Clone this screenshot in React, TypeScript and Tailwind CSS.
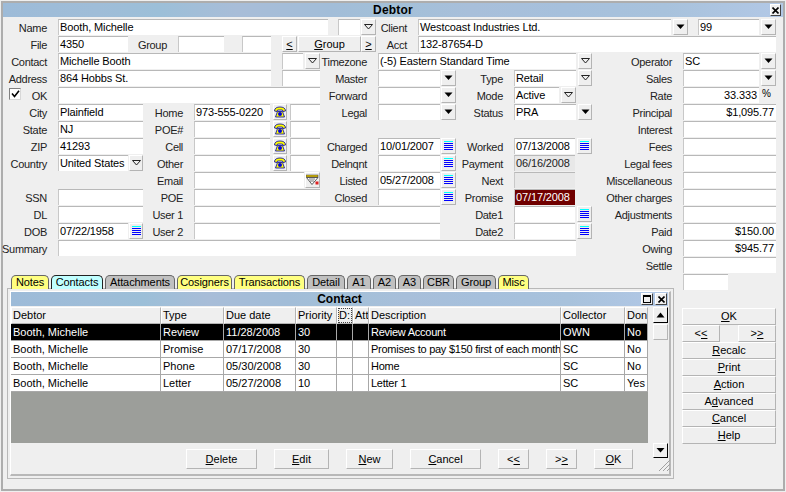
import { ReactNode } from "react";

const titleBg =
  "bg-[linear-gradient(90deg,#9dbbd8_0%,#9fbdd8_12%,#9cbfd8_20%,#a8bdd8_30%,#a2bdd8_42%,#a3c0d8_50%,#a8bfda_60%,#a6c0dc_72%,#a8c2dc_85%,#b2c8e6_100%)]";
const raised = "bg-[#efefef] border border-t-white border-l-white border-r-[#b4b4b4] border-b-[#b4b4b4]";

function Row({ children }: { children: ReactNode }) {
  return <div className="flex h-[17px] shrink-0 items-start">{children}</div>;
}

// label: right aligned, ends 11px before the next field
function L({ w, children }: { w: string; children?: ReactNode }) {
  return (
    <div className={`${w} mr-[11px] flex h-[16px] shrink-0 items-center justify-end whitespace-nowrap pt-[2px] tracking-[-0.3px] text-[#222]`}>
      {children}
    </div>
  );
}

function F({ c, children, right, tone }: { c: string; children?: ReactNode; right?: boolean; tone?: string }) {
  return (
    <div
      className={`${c} ${tone ?? "bg-white text-black"} ${right ? "justify-end pr-[2px]" : "pl-[1px]"} flex h-[16px] shrink-0 items-center overflow-hidden whitespace-nowrap border-t border-l border-t-[#b8b8b8] border-l-[#c8c8c8] leading-none tracking-[-0.12px]`}
    >
      {children}
    </div>
  );
}

function Dd({ c = "", solid }: { c?: string; solid?: boolean }) {
  return (
    <div className={`${c} ${raised} flex h-[16px] w-[15px] shrink-0 items-center justify-center`}>
      <svg width="9" height="6" viewBox="0 0 9 6">
        {solid ? <path d="M0.5 0.5h8L4.5 5z" fill="#000" /> : <path d="M0.5 0.5h8L4.5 5z" fill="none" stroke="#222" />}
      </svg>
    </div>
  );
}

function Cal({ c = "" }: { c?: string }) {
  return (
    <div className={`${c} ${raised} flex h-[16px] w-[15px] shrink-0 items-center justify-center`}>
      <svg width="9" height="10" viewBox="0 0 9 10" shapeRendering="crispEdges">
        <rect x="0" y="0" width="9" height="1" fill="#00ffff" />
        <rect x="0" y="2" width="9" height="1" fill="#0000ff" />
        <rect x="0" y="4" width="9" height="1" fill="#0000ff" />
        <rect x="0" y="6" width="9" height="1" fill="#0000ff" />
        <rect x="0" y="8" width="9" height="1" fill="#0000ff" />
      </svg>
    </div>
  );
}

function Phone() {
  return (
    <div className={`ml-[3px] ${raised} flex h-[16px] w-[14px] shrink-0 items-center justify-center`}>
      <svg width="12" height="12" viewBox="0 0 12 12">
        <path d="M0.5 5C0.5 2 3 1 6 1s5.5 1 5.5 4L9 5.5 8.5 4h-5L3 5.5z" fill="#ffff00" stroke="#0000a0" strokeWidth="0.8" />
        <path d="M3.5 5.5h5l2 5.5h-9z" fill="#ffff00" stroke="#0000a0" strokeWidth="0.8" />
        <circle cx="6" cy="8" r="2" fill="#0000e0" />
      </svg>
    </div>
  );
}

function Mail() {
  return (
    <div className={`ml-[1px] ${raised} flex h-[16px] w-[15px] shrink-0 items-center justify-center`}>
      <svg width="13" height="12" viewBox="0 0 13 12">
        <rect x="0" y="1" width="12" height="2" fill="#e0c000" stroke="#333" strokeWidth="0.5" />
        <path d="M0.5 3.5l5.5 7 6-7z" fill="#fff" stroke="#333" strokeWidth="0.8" />
        <path d="M3 5h6M4 7h4" stroke="#555" strokeWidth="0.8" />
        <rect x="9.5" y="7.5" width="3" height="3" fill="#e02020" />
      </svg>
    </div>
  );
}

function Btn({ c, children }: { c: string; children: ReactNode }) {
  return <div className={`${c} ${raised} flex shrink-0 items-center justify-center whitespace-nowrap leading-none`}>{children}</div>;
}

function Tab({ w, bg, children, active }: { w: string; bg: string; children: string; active?: boolean }) {
  return (
    <div
      className={`${w} ${bg} z-10 flex h-[14px] shrink-0 items-center justify-center rounded-t-[5px] border border-b-0 leading-none tracking-[-0.1px] ${active ? "border-[#222]" : "border-[#666]"}`}
    >
      {children}
    </div>
  );
}

const columns = "grid grid-cols-[150px_63px_72px_41px_16px_16px_192px_64px_23px]";
const heads = ["Debtor", "Type", "Due date", "Priority", "D:", "Att", "Description", "Collector", "Don"];
const rows = [
  ["Booth, Michelle", "Review", "11/28/2008", "30", "", "", "Review Account", "OWN", "No"],
  ["Booth, Michelle", "Promise", "07/17/2008", "30", "", "", "Promises to pay $150 first of each month", "SC", "No"],
  ["Booth, Michelle", "Phone", "05/30/2008", "30", "", "", "Home", "SC", "No"],
  ["Booth, Michelle", "Letter", "05/27/2008", "10", "", "", "Letter 1", "SC", "Yes"],
];

const u = "underline underline-offset-1";

export default function App() {
  return (
    <div className="h-[492px] w-[786px] overflow-hidden bg-[#efefef] p-[1px] font-['Liberation_Sans',Arial,sans-serif] text-[11px] text-black">
      <div className="flex h-[490px] w-[784px] flex-col border-2 border-[#adadad]">
        <div className={`${titleBg} relative flex h-[14px] shrink-0 items-center justify-center text-[12px] font-bold leading-none tracking-[0.2px]`}>
          Debtor
          <div className="absolute right-[2px] top-[1px] flex h-[12px] w-[11px] items-center justify-center border border-t-white border-l-white border-r-[#444] border-b-[#444] bg-[#efefef]">
            <svg width="7" height="7" viewBox="0 0 7 7">
              <path d="M0.5 0.5l6 6M6.5 0.5l-6 6" stroke="#000" strokeWidth="1.6" />
            </svg>
          </div>
        </div>

        <div className="flex h-[2px] shrink-0" />

        <Row>
          <L w="w-[44px]">Name</L>
          <F c="w-[270px]">Booth, Michelle</F>
          <F c="ml-[10px] w-[22px]" />
          <Dd c="ml-[1px]" />
          <L w="w-[31px]">Client</L>
          <F c="w-[253px]">Westcoast Industries Ltd.</F>
          <Dd c="ml-[2px]" solid />
          <F c="ml-[10px] w-[61px]">99</F>
          <Dd c="ml-[2px]" solid />
        </Row>
        <Row>
          <L w="w-[44px]">File</L>
          <F c="w-[70px]">4350</F>
          <L w="w-[39px]">Group</L>
          <F c="w-[46px]" />
          <F c="ml-[18px] w-[29px]" />
          <Btn c="ml-[11px] h-[16px] w-[15px]"><span className={u}>&lt;</span></Btn>
          <Btn c="ml-[1px] h-[16px] w-[63px]"><span><span className={u}>G</span>roup</span></Btn>
          <Btn c="h-[16px] w-[15px]"><span className={u}>&gt;</span></Btn>
          <L w="w-[31px]">Acct</L>
          <F c="w-[358px]">132-87654-D</F>
        </Row>
        <Row>
          <L w="w-[44px]">Contact</L>
          <F c="w-[213px]">Michelle Booth</F>
          <F c="ml-[11px] w-[21px]" />
          <Dd c="ml-[2px]" />
          <L w="w-[47px]">Timezone</L>
          <F c="w-[198px]">(-5) Eastern Standard Time</F>
          <Dd c="ml-[2px] !w-[14px]" />
          <L w="w-[80px]">Operator</L>
          <F c="w-[76px]">SC</F>
          <Dd c="ml-[2px]" solid />
        </Row>
        <Row>
          <L w="w-[44px]">Address</L>
          <F c="w-[213px]">864 Hobbs St.</F>
          <F c="ml-[11px] w-[38px]" />
          <L w="w-[47px]">Master</L>
          <F c="w-[62px]" />
          <Dd c="ml-[1px]" solid />
          <L w="w-[47px]">Type</L>
          <F c="w-[62px]">Retail</F>
          <Dd c="ml-[2px] !w-[14px]" />
          <L w="w-[80px]">Sales</L>
          <F c="w-[76px]" />
          <Dd c="ml-[2px]" solid />
        </Row>
        <Row>
          <div className="ml-[6px] mt-[1px] flex h-[12px] w-[12px] shrink-0 items-center justify-center border border-t-[#808080] border-l-[#808080] border-r-[#d8d8d8] border-b-[#d8d8d8] bg-white">
            <svg width="9" height="8" viewBox="0 0 9 8">
              <path d="M1 3.5l2.5 3L8 0.8" fill="none" stroke="#000" strokeWidth="1.6" />
            </svg>
          </div>
          <L w="w-[26px]">OK</L>
          <F c="w-[262px]" />
          <L w="w-[47px]">Forward</L>
          <F c="w-[62px]" />
          <Dd c="ml-[1px]" solid />
          <L w="w-[47px]">Mode</L>
          <F c="w-[45px]">Active</F>
          <Dd c="ml-[2px]" />
          <L w="w-[96px]">Rate</L>
          <F c="w-[76px]" right>33.333</F>
          <span className="ml-[3px] mt-[2px] text-[10px] leading-none">%</span>
        </Row>
        <Row>
          <L w="w-[44px]">City</L>
          <F c="w-[85px]">Plainfield</F>
          <L w="w-[40px]">Home</L>
          <F c="w-[76px]">973-555-0220</F>
          <Phone />
          <F c="ml-[3px] w-[30px]" />
          <L w="w-[47px]">Legal</L>
          <F c="w-[62px]" />
          <Dd c="ml-[1px]" solid />
          <L w="w-[47px]">Status</L>
          <F c="w-[62px]">PRA</F>
          <Dd c="ml-[2px] !w-[14px]" solid />
          <L w="w-[80px]">Principal</L>
          <F c="w-[93px]" right>$1,095.77</F>
        </Row>
        <Row>
          <L w="w-[44px]">State</L>
          <F c="w-[85px]">NJ</F>
          <L w="w-[40px]">POE#</L>
          <F c="w-[76px]" />
          <Phone />
          <F c="ml-[3px] w-[30px]" />
          <L w="w-[352px]">Interest</L>
          <F c="w-[93px]" />
        </Row>
        <Row>
          <L w="w-[44px]">ZIP</L>
          <F c="w-[85px]">41293</F>
          <L w="w-[40px]">Cell</L>
          <F c="w-[76px]" />
          <Phone />
          <F c="ml-[3px] w-[30px]" />
          <L w="w-[47px]">Charged</L>
          <F c="w-[62px]">10/01/2007</F>
          <Cal c="ml-[1px]" />
          <L w="w-[47px]">Worked</L>
          <F c="w-[61px]">07/13/2008</F>
          <Cal c="ml-[2px]" />
          <L w="w-[80px]">Fees</L>
          <F c="w-[93px]" />
        </Row>
        <Row>
          <L w="w-[44px]">Country</L>
          <F c="w-[70px]">United States</F>
          <Dd c="ml-[1px] !w-[14px]" />
          <L w="w-[40px]">Other</L>
          <F c="w-[76px]" />
          <Phone />
          <F c="ml-[3px] w-[30px]" />
          <L w="w-[47px]">Delnqnt</L>
          <F c="w-[62px]" />
          <Cal c="ml-[1px]" />
          <L w="w-[47px]">Payment</L>
          <F c="w-[61px]" tone="bg-[#e8e8e8] text-[#222]">06/16/2008</F>
          <L w="w-[97px]">Legal fees</L>
          <F c="w-[93px]" />
        </Row>
        <Row>
          <L w="w-[180px]">Email</L>
          <F c="w-[110px]" />
          <Mail />
          <L w="w-[47px]">Listed</L>
          <F c="w-[62px]">05/27/2008</F>
          <Cal c="ml-[1px]" />
          <L w="w-[47px]">Next</L>
          <F c="w-[61px]" tone="bg-[#e8e8e8] text-[#222]" />
          <L w="w-[97px]">Miscellaneous</L>
          <F c="w-[93px]" />
        </Row>
        <Row>
          <L w="w-[44px]">SSN</L>
          <F c="w-[85px]" />
          <L w="w-[40px]">POE</L>
          <F c="w-[126px]" />
          <L w="w-[47px]">Closed</L>
          <F c="w-[62px]" />
          <Cal c="ml-[1px]" />
          <L w="w-[47px]">Promise</L>
          <F c="w-[61px]" tone="bg-[#700000] text-white">07/17/2008</F>
          <L w="w-[97px]">Other charges</L>
          <F c="w-[93px]" />
        </Row>
        <Row>
          <L w="w-[44px]">DL</L>
          <F c="w-[85px]" />
          <L w="w-[40px]">User 1</L>
          <F c="w-[246px]" />
          <L w="w-[63px]">Date1</L>
          <F c="w-[61px]" />
          <Cal c="ml-[2px]" />
          <L w="w-[80px]">Adjustments</L>
          <F c="w-[93px]" />
        </Row>
        <Row>
          <L w="w-[44px]">DOB</L>
          <F c="w-[70px]">07/22/1958</F>
          <Cal c="ml-[1px] !w-[14px]" />
          <L w="w-[40px]">User 2</L>
          <F c="w-[246px]" />
          <L w="w-[63px]">Date2</L>
          <F c="w-[61px]" />
          <Cal c="ml-[2px]" />
          <L w="w-[80px]">Paid</L>
          <F c="w-[93px]" right>$150.00</F>
        </Row>
        <Row>
          <L w="w-[44px]">Summary</L>
          <F c="w-[518px]" />
          <L w="w-[96px]">Owing</L>
          <F c="w-[93px]" right>$945.77</F>
        </Row>
        <Row>
          <L w="w-[669px]">Settle</L>
          <F c="w-[93px]" />
        </Row>

        {/* tabs */}
        <div className="flex h-[14px] shrink-0 items-start">
          <div className="ml-[8px] mt-[1px] flex gap-[2px]">
            <Tab w="w-[38px]" bg="bg-[#ffff80]">Notes</Tab>
            <Tab w="w-[52px]" bg="bg-[#c0ffff]" active>Contacts</Tab>
            <Tab w="w-[70px]" bg="bg-[#c0c0c0]">Attachments</Tab>
            <Tab w="w-[55px]" bg="bg-[#ffff80]">Cosigners</Tab>
            <Tab w="w-[71px]" bg="bg-[#ffff80]">Transactions</Tab>
            <Tab w="w-[38px]" bg="bg-[#c0c0c0]">Detail</Tab>
            <Tab w="w-[24px]" bg="bg-[#c0c0c0]">A1</Tab>
            <Tab w="w-[23px]" bg="bg-[#c0c0c0]">A2</Tab>
            <Tab w="w-[23px]" bg="bg-[#c0c0c0]">A3</Tab>
            <Tab w="w-[31px]" bg="bg-[#c0c0c0]">CBR</Tab>
            <Tab w="w-[40px]" bg="bg-[#c0c0c0]">Group</Tab>
            <Tab w="w-[31px]" bg="bg-[#ffff80]">Misc</Tab>
          </div>
          <F c="ml-[154px] w-[45px]" />
        </div>

        <div className="flex min-h-0 flex-1 items-start">
          {/* contact panel */}
          <div className="ml-[4px] h-[191px] w-[667px] shrink-0 border border-[#b8b8b8] p-[2px]">
            <div className="flex h-full flex-col border border-b-2 border-r-2 border-t-white border-l-white border-r-[#b8b8b8] border-b-[#b8b8b8] pr-[1px]">
              <div className={`${titleBg} relative flex h-[14px] shrink-0 items-center justify-center text-[12px] font-bold leading-none`}>
                Contact
                <div className="absolute right-[15px] top-[1px] flex h-[12px] w-[12px] items-center justify-center border border-t-white border-l-white border-r-[#444] border-b-[#444] bg-[#efefef]">
                  <div className="h-[8px] w-[8px] border border-t-2 border-black" />
                </div>
                <div className="absolute right-[1px] top-[1px] flex h-[12px] w-[12px] items-center justify-center border border-t-white border-l-white border-r-[#444] border-b-[#444] bg-[#efefef]">
                  <svg width="7" height="7" viewBox="0 0 7 7">
                    <path d="M0.5 0.5l6 6M6.5 0.5l-6 6" stroke="#000" strokeWidth="1.6" />
                  </svg>
                </div>
              </div>

              <div className="mt-[1px] flex min-h-0 flex-1">
                <div className="flex w-[637px] shrink-0 flex-col">
                  <div className={`${columns} h-[17px] shrink-0`}>
                    {heads.map((h, i) => (
                      <div
                        key={h}
                        className={`flex items-center overflow-hidden whitespace-nowrap border border-t-white border-l-white border-r-[#b4b4b4] border-b-[#b4b4b4] pl-[1px] leading-none ${i === 4 ? "outline-1 -outline-offset-2 outline-dotted outline-[#444]" : ""}`}
                      >
                        {h}
                      </div>
                    ))}
                  </div>
                  {rows.map((r, ri) => (
                    <div key={ri} className={`${columns} h-[17px] shrink-0 ${ri === 0 ? "bg-black text-white" : "bg-white text-black"}`}>
                      {r.map((c, ci) => (
                        <div
                          key={ci}
                          className={`flex items-center overflow-hidden whitespace-nowrap border-r border-b border-[#a8a8a8] pl-[2px] leading-none ${ci === 6 ? "tracking-[-0.25px]" : ""}`}
                        >
                          {c}
                        </div>
                      ))}
                    </div>
                  ))}
                  <div className="h-[51px] shrink-0 bg-[#9c9e9a]" />
                  <div className="mt-[6px] flex pl-[175px]">
                    <Btn c="h-[20px] w-[71px]"><span><span className={u}>D</span>elete</span></Btn>
                    <Btn c="ml-[17px] h-[20px] w-[55px]"><span><span className={u}>E</span>dit</span></Btn>
                    <Btn c="ml-[17px] h-[20px] w-[47px]"><span><span className={u}>N</span>ew</span></Btn>
                    <Btn c="ml-[17px] h-[20px] w-[71px]"><span><span className={u}>C</span>ancel</span></Btn>
                    <Btn c="ml-[17px] h-[20px] w-[31px]"><span>&lt;<span className={u}>&lt;</span></span></Btn>
                    <Btn c="ml-[17px] h-[20px] w-[31px]"><span>&gt;<span className={u}>&gt;</span></span></Btn>
                    <Btn c="ml-[17px] h-[20px] w-[39px]"><span><span className={u}>O</span>K</span></Btn>
                  </div>
                </div>

                {/* scroll column */}
                <div className="ml-[5px] flex w-[15px] shrink-0 flex-col">
                  <div className="flex h-[16px] shrink-0 items-center justify-center border border-t-white border-l-white border-r-black border-b-black bg-[#efefef]">
                    <svg width="9" height="6" viewBox="0 0 9 6"><path d="M4.5 0.5l4 5h-8z" fill="#000" /></svg>
                  </div>
                  <div className={`mt-[1px] h-[16px] shrink-0 ${raised}`} />
                  <div className="flex-1" />
                  <div className="flex h-[15px] shrink-0 items-center justify-center border border-t-white border-l-white border-r-black border-b-black bg-[#efefef]">
                    <svg width="9" height="5" viewBox="0 0 9 5"><path d="M0.5 0h8l-4 4.5z" fill="#000" /></svg>
                  </div>
                  <div className="flex h-[16px] shrink-0 items-end justify-end">
                    <svg className="-mr-[2px] mb-[3px] shrink-0" width="11" height="11" viewBox="0 0 11 11">
                      <path d="M0 11L11 0M4 11L11 4M8 11L11 8" stroke="#a0a0a0" strokeWidth="1" />
                    </svg>
                  </div>
                </div>
              </div>
            </div>
          </div>

          {/* right buttons */}
          <div className="ml-[8px] mt-[20px] flex w-[94px] shrink-0 flex-col">
            <Btn c="h-[17px] w-full"><span><span className={u}>O</span>K</span></Btn>
            <div className="flex h-[17px] justify-between">
              <Btn c="h-[17px] w-[38px]"><span>&lt;<span className={u}>&lt;</span></span></Btn>
              <Btn c="h-[17px] w-[38px]"><span>&gt;<span className={u}>&gt;</span></span></Btn>
            </div>
            <Btn c="h-[17px] w-full"><span><span className={u}>R</span>ecalc</span></Btn>
            <Btn c="h-[17px] w-full"><span><span className={u}>P</span>rint</span></Btn>
            <Btn c="h-[17px] w-full"><span><span className={u}>A</span>ction</span></Btn>
            <Btn c="h-[17px] w-full"><span>A<span className={u}>d</span>vanced</span></Btn>
            <Btn c="h-[17px] w-full"><span><span className={u}>C</span>ancel</span></Btn>
            <Btn c="h-[17px] w-full"><span><span className={u}>H</span>elp</span></Btn>
          </div>
        </div>
      </div>
    </div>
  );
}
